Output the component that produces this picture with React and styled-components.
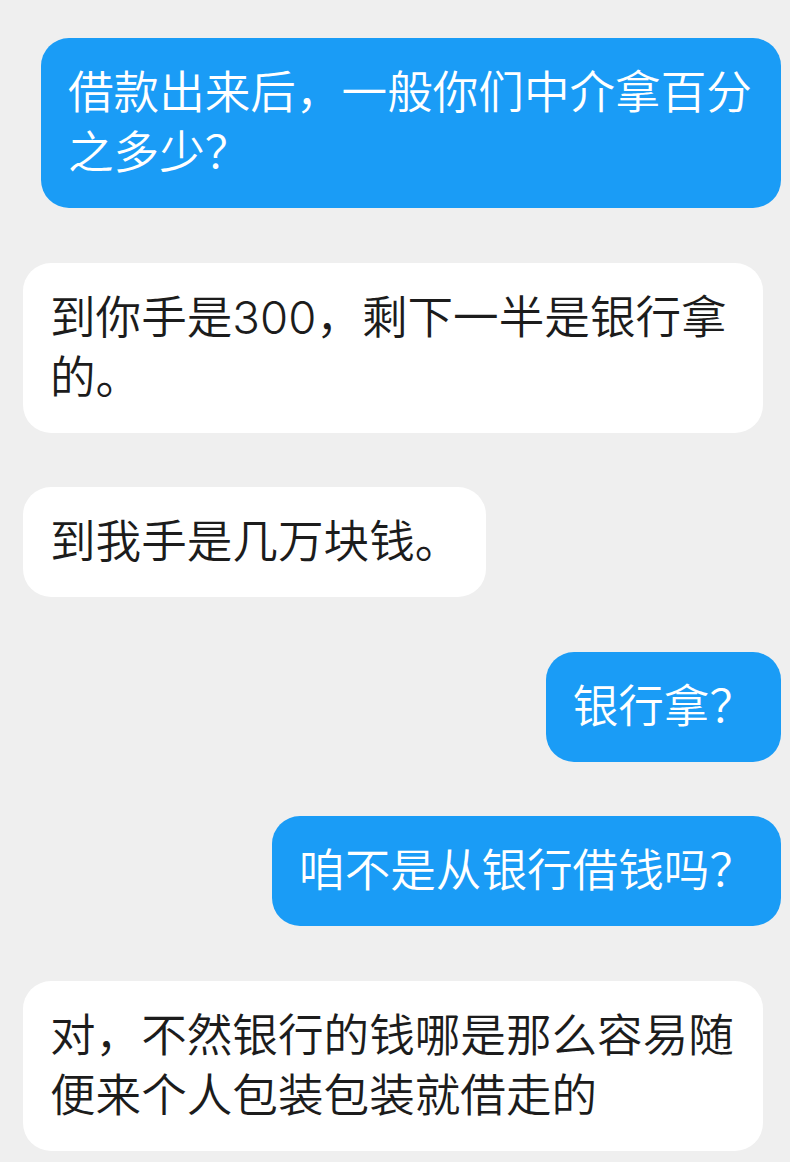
import React from "react";
import styled, { createGlobalStyle } from "styled-components";

const GlobalStyle = createGlobalStyle`
  html, body {
    margin: 0;
    padding: 0;
    background: #efefef;
  }
  body {
    font-family: Inter, "Noto Sans CJK SC", "Noto Sans", sans-serif;
  }
`;

const Chat = styled.div`
  width: 790px;
  min-height: 1162px;
  box-sizing: border-box;
  background: #efefef;
  padding: 38px 9px 12px 23px;
  display: flex;
  flex-direction: column;
  gap: 54.6px;
`;

const Row = styled.div`
  display: flex;
  justify-content: ${(p) => (p.$mine ? "flex-end" : "flex-start")};
`;

const Bubble = styled.div`
  max-width: 740px;
  box-sizing: border-box;
  padding: 25px 26px 25px 27px;
  border-radius: 28px;
  font-size: 45.6px;
  font-weight: 350;
  line-height: 60px;
  background: ${(p) => (p.$mine ? "#1a9cf6" : "#ffffff")};
  color: ${(p) => (p.$mine ? "#ffffff" : "#1c1c1c")};
  word-break: break-all;
`;

const messages = [
  { mine: true, text: "借款出来后，一般你们中介拿百分之多少？" },
  { mine: false, text: "到你手是300，剩下一半是银行拿的。" },
  { mine: false, text: "到我手是几万块钱。" },
  { mine: true, text: "银行拿？" },
  { mine: true, text: "咱不是从银行借钱吗？" },
  { mine: false, text: "对，不然银行的钱哪是那么容易随便来个人包装包装就借走的" },
];

export default function App() {
  return (
    <>
      <GlobalStyle />
      <Chat>
        {messages.map((m, i) => (
          <Row key={i} $mine={m.mine}>
            <Bubble $mine={m.mine}>{m.text}</Bubble>
          </Row>
        ))}
      </Chat>
    </>
  );
}
